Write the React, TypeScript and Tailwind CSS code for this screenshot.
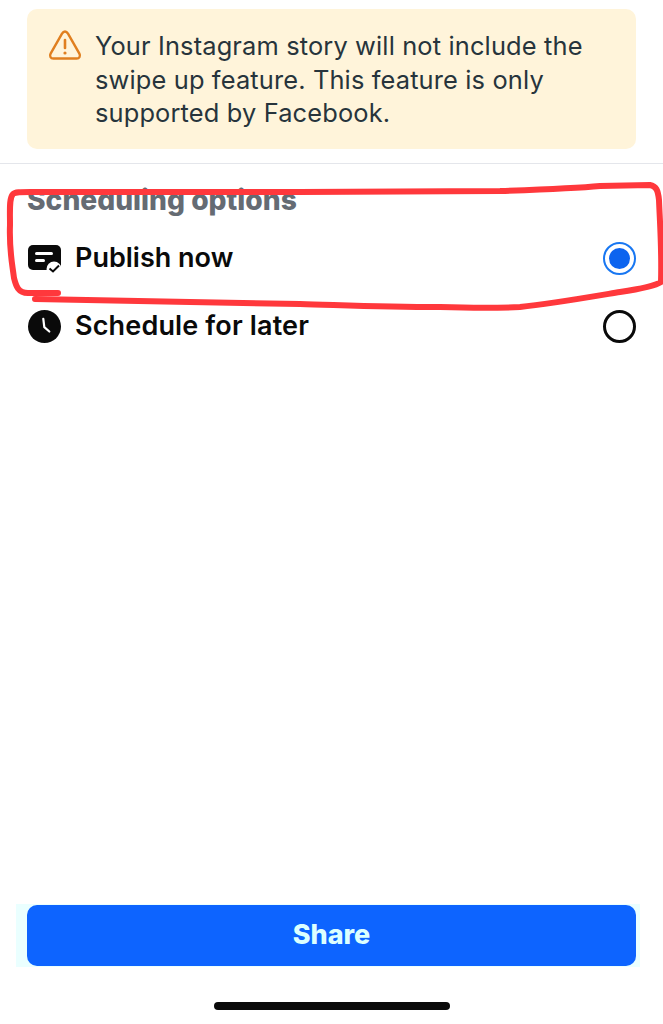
export default function App() {
  return (
    <div className="relative flex h-[1024px] w-[663px] flex-col overflow-hidden bg-white font-['Inter','Liberation_Sans',sans-serif]">
      <div className="mx-[27px] mt-[9px] flex h-[140px] w-[609px] gap-[13px] rounded-[10px] bg-[#fff4da] pl-[21px] pr-[10px] pt-[20px]">
        <svg className="mt-[-1px] h-[34px] w-[34px] shrink-0" viewBox="0 0 34 34" fill="none">
          <path d="M17 3.5 C15.6 3.5 14.8 4.3 14 5.6 L2.6 25.6 C1.3 28 2.5 30.5 5.4 30.5 H28.6 C31.5 30.5 32.7 28 31.4 25.6 L20 5.6 C19.2 4.3 18.4 3.5 17 3.5 Z" stroke="#e07f1f" strokeWidth="2.4" strokeLinejoin="round" />
          <path d="M17 12 V20" stroke="#e07f1f" strokeWidth="2.6" strokeLinecap="round" />
          <circle cx="17" cy="25" r="1.6" fill="#e07f1f" />
        </svg>
        <p className="text-[25.4px] leading-[33.5px] tracking-[0.15px] text-[#27343c]">
          Your Instagram story will not include the swipe up feature. This feature is only supported by Facebook.
        </p>
      </div>
      <div className="mt-[14px] h-px w-full bg-[#e4e6eb]" />
      <h2 className="ml-[27px] mt-[20px] text-[28.2px] font-extrabold leading-[32px] text-[#656b73]">Scheduling options</h2>
      <div className="mt-[22px] flex h-[40px] items-center pl-[28px] pr-[27px]">
        <svg className="h-[32px] w-[33px] shrink-0" viewBox="0 0 33 32">
          <rect x="0" y="3" width="33" height="25" rx="5" fill="#0a0a0a" />
          <rect x="7" y="10" width="18" height="3" rx="1.5" fill="#fff" />
          <rect x="7" y="17" width="10" height="3" rx="1.5" fill="#fff" />
          <circle cx="26" cy="27" r="7.5" fill="#fff" />
          <path d="M21.5 26.5 L25 29.5 L31 23.5" fill="none" stroke="#0a0a0a" strokeWidth="2" />
        </svg>
        <span className="ml-[14px] flex-1 text-[27px] font-semibold leading-[34px] text-[#0a0a0a]">Publish now</span>
        <span className="flex h-[33px] w-[33px] items-center justify-center rounded-full border-2 border-[#1877f2] bg-white">
          <span className="h-[21px] w-[21px] rounded-full bg-[#0d64ef]" />
        </span>
      </div>
      <div className="mt-[28px] flex h-[40px] items-center pl-[28px] pr-[27px]">
        <svg className="h-[33px] w-[33px] shrink-0" viewBox="0 0 33 33">
          <circle cx="16.5" cy="16.5" r="16.5" fill="#0a0a0a" />
          <path d="M15.3 8.8 L16.3 17.2 L21.3 21.5" fill="none" stroke="#fff" strokeWidth="2.2" strokeLinecap="round" strokeLinejoin="round" />
        </svg>
        <span className="ml-[14px] flex-1 text-[27px] font-semibold leading-[34px] tracking-[0.15px] text-[#0a0a0a]">Schedule for later</span>
        <span className="h-[33px] w-[33px] rounded-full border-[3px] border-[#0a0a0a]" />
      </div>
      <div className="ml-[16px] mt-auto w-[624px] bg-[#eaffff] py-px pl-[11px] pr-[4px]">
        <button className="flex h-[61px] w-[609px] items-center justify-center rounded-[10px] bg-[#0d64ff] text-[27px] font-extrabold text-[#dcffff]">
          Share
        </button>
      </div>
      <div className="mx-auto mb-[14px] mt-[35px] h-[8px] w-[236px] shrink-0 rounded-full bg-[#0a0a0a]" />
      <svg className="pointer-events-none absolute left-0 top-0 h-[1024px] w-[663px]" viewBox="0 0 663 1024" fill="none">
        <path d="M58 293 H28 C18 293 16 286 14 278 C12 262 9 250 10 225 C10 210 9 198 13 194 C15 192 20 192 30 192 L300 192 L500 191 C530 190 580 188 600 186 L650 185 C656 186 658 190 659 200 C660 225 662 250 661 282 C655 286 640 289 620 292 C590 297 550 304 520 307 C500 308 470 308 440 307 C380 307 340 305 300 304 L190 302 L35 299" stroke="#ff383c" strokeWidth="6" strokeLinecap="round" strokeLinejoin="round" />
      </svg>
    </div>
  );
}
